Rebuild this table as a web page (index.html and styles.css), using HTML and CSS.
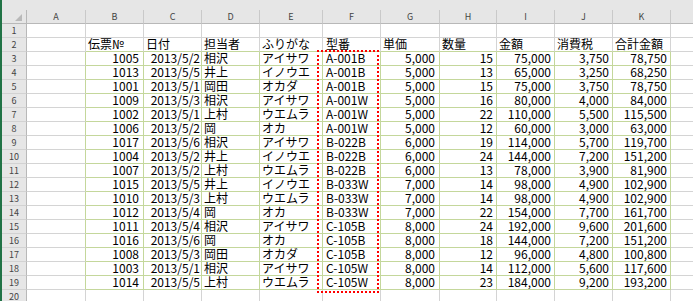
FILE: index.html
```html
<!DOCTYPE html>
<html lang="ja">
<head>
<meta charset="utf-8">
<title>Sheet</title>
<link rel="stylesheet" href="styles.css">
</head>
<body>
<div class="frame"></div>
<div class="sheet">
  <div class="corner"><svg width="8" height="7" viewBox="0 0 8 7"><polygon points="7,0 7,7 0,7" fill="#b9b9b9"/></svg></div>
  <div class="ch">A</div><div class="ch">B</div><div class="ch">C</div><div class="ch">D</div><div class="ch">E</div><div class="ch">F</div><div class="ch">G</div><div class="ch">H</div><div class="ch">I</div><div class="ch">J</div><div class="ch">K</div><div class="ch"></div>

  <div class="rh">1</div><div class="c"></div><div class="c"></div><div class="c"></div><div class="c"></div><div class="c"></div><div class="c"></div><div class="c"></div><div class="c"></div><div class="c"></div><div class="c"></div><div class="c"></div><div class="c"></div>

  <div class="rh">2</div><div class="c"></div><div class="c hg">伝票№</div><div class="c hg">日付</div><div class="c hg">担当者</div><div class="c hg">ふりがな</div><div class="c hg pf">型番</div><div class="c hg">単価</div><div class="c hg">数量</div><div class="c hg">金額</div><div class="c hg">消費税</div><div class="c hg">合計金額</div><div class="c"></div>

  <div class="rh">3</div><div class="c ag"></div><div class="c g n pb">1005</div><div class="c g n pc">2013/5/2</div><div class="c g">相沢</div><div class="c g">アイサワ</div><div class="c g pf">A-001B</div><div class="c g n pb">5,000</div><div class="c g n">15</div><div class="c g n">75,000</div><div class="c g n">3,750</div><div class="c g n">78,750</div><div class="c"></div>
  <div class="rh">4</div><div class="c ag"></div><div class="c g n pb">1013</div><div class="c g n pc">2013/5/5</div><div class="c g">井上</div><div class="c g">イノウエ</div><div class="c g pf">A-001B</div><div class="c g n pb">5,000</div><div class="c g n">13</div><div class="c g n">65,000</div><div class="c g n">3,250</div><div class="c g n">68,250</div><div class="c"></div>
  <div class="rh">5</div><div class="c ag"></div><div class="c g n pb">1001</div><div class="c g n pc">2013/5/1</div><div class="c g">岡田</div><div class="c g">オカダ</div><div class="c g pf">A-001B</div><div class="c g n pb">5,000</div><div class="c g n">15</div><div class="c g n">75,000</div><div class="c g n">3,750</div><div class="c g n">78,750</div><div class="c"></div>
  <div class="rh">6</div><div class="c ag"></div><div class="c g n pb">1009</div><div class="c g n pc">2013/5/3</div><div class="c g">相沢</div><div class="c g">アイサワ</div><div class="c g pf">A-001W</div><div class="c g n pb">5,000</div><div class="c g n">16</div><div class="c g n">80,000</div><div class="c g n">4,000</div><div class="c g n">84,000</div><div class="c"></div>
  <div class="rh">7</div><div class="c ag"></div><div class="c g n pb">1002</div><div class="c g n pc">2013/5/1</div><div class="c g">上村</div><div class="c g">ウエムラ</div><div class="c g pf">A-001W</div><div class="c g n pb">5,000</div><div class="c g n">22</div><div class="c g n">110,000</div><div class="c g n">5,500</div><div class="c g n">115,500</div><div class="c"></div>
  <div class="rh">8</div><div class="c ag"></div><div class="c g n pb">1006</div><div class="c g n pc">2013/5/2</div><div class="c g">岡</div><div class="c g">オカ</div><div class="c g pf">A-001W</div><div class="c g n pb">5,000</div><div class="c g n">12</div><div class="c g n">60,000</div><div class="c g n">3,000</div><div class="c g n">63,000</div><div class="c"></div>
  <div class="rh">9</div><div class="c ag"></div><div class="c g n pb">1017</div><div class="c g n pc">2013/5/6</div><div class="c g">相沢</div><div class="c g">アイサワ</div><div class="c g pf">B-022B</div><div class="c g n pb">6,000</div><div class="c g n">19</div><div class="c g n">114,000</div><div class="c g n">5,700</div><div class="c g n">119,700</div><div class="c"></div>
  <div class="rh">10</div><div class="c ag"></div><div class="c g n pb">1004</div><div class="c g n pc">2013/5/2</div><div class="c g">井上</div><div class="c g">イノウエ</div><div class="c g pf">B-022B</div><div class="c g n pb">6,000</div><div class="c g n">24</div><div class="c g n">144,000</div><div class="c g n">7,200</div><div class="c g n">151,200</div><div class="c"></div>
  <div class="rh">11</div><div class="c ag"></div><div class="c g n pb">1007</div><div class="c g n pc">2013/5/2</div><div class="c g">上村</div><div class="c g">ウエムラ</div><div class="c g pf">B-022B</div><div class="c g n pb">6,000</div><div class="c g n">13</div><div class="c g n">78,000</div><div class="c g n">3,900</div><div class="c g n">81,900</div><div class="c"></div>
  <div class="rh">12</div><div class="c ag"></div><div class="c g n pb">1015</div><div class="c g n pc">2013/5/5</div><div class="c g">井上</div><div class="c g">イノウエ</div><div class="c g pf">B-033W</div><div class="c g n pb">7,000</div><div class="c g n">14</div><div class="c g n">98,000</div><div class="c g n">4,900</div><div class="c g n">102,900</div><div class="c"></div>
  <div class="rh">13</div><div class="c ag"></div><div class="c g n pb">1010</div><div class="c g n pc">2013/5/3</div><div class="c g">上村</div><div class="c g">ウエムラ</div><div class="c g pf">B-033W</div><div class="c g n pb">7,000</div><div class="c g n">14</div><div class="c g n">98,000</div><div class="c g n">4,900</div><div class="c g n">102,900</div><div class="c"></div>
  <div class="rh">14</div><div class="c ag"></div><div class="c g n pb">1012</div><div class="c g n pc">2013/5/4</div><div class="c g">岡</div><div class="c g">オカ</div><div class="c g pf">B-033W</div><div class="c g n pb">7,000</div><div class="c g n">22</div><div class="c g n">154,000</div><div class="c g n">7,700</div><div class="c g n">161,700</div><div class="c"></div>
  <div class="rh">15</div><div class="c ag"></div><div class="c g n pb">1011</div><div class="c g n pc">2013/5/4</div><div class="c g">相沢</div><div class="c g">アイサワ</div><div class="c g pf">C-105B</div><div class="c g n pb">8,000</div><div class="c g n">24</div><div class="c g n">192,000</div><div class="c g n">9,600</div><div class="c g n">201,600</div><div class="c"></div>
  <div class="rh">16</div><div class="c ag"></div><div class="c g n pb">1016</div><div class="c g n pc">2013/5/6</div><div class="c g">岡</div><div class="c g">オカ</div><div class="c g pf">C-105B</div><div class="c g n pb">8,000</div><div class="c g n">18</div><div class="c g n">144,000</div><div class="c g n">7,200</div><div class="c g n">151,200</div><div class="c"></div>
  <div class="rh">17</div><div class="c ag"></div><div class="c g n pb">1008</div><div class="c g n pc">2013/5/3</div><div class="c g">岡田</div><div class="c g">オカダ</div><div class="c g pf">C-105B</div><div class="c g n pb">8,000</div><div class="c g n">12</div><div class="c g n">96,000</div><div class="c g n">4,800</div><div class="c g n">100,800</div><div class="c"></div>
  <div class="rh">18</div><div class="c ag"></div><div class="c g n pb">1003</div><div class="c g n pc">2013/5/1</div><div class="c g">相沢</div><div class="c g">アイサワ</div><div class="c g pf">C-105W</div><div class="c g n pb">8,000</div><div class="c g n">14</div><div class="c g n">112,000</div><div class="c g n">5,600</div><div class="c g n">117,600</div><div class="c"></div>
  <div class="rh">19</div><div class="c ag"></div><div class="c g n pb">1014</div><div class="c g n pc">2013/5/5</div><div class="c g">上村</div><div class="c g">ウエムラ</div><div class="c g pf">C-105W</div><div class="c g n pb">8,000</div><div class="c g n">23</div><div class="c g n">184,000</div><div class="c g n">9,200</div><div class="c g n">193,200</div><div class="c"></div>

  <div class="rh">20</div><div class="c"></div><div class="c"></div><div class="c"></div><div class="c"></div><div class="c"></div><div class="c"></div><div class="c"></div><div class="c"></div><div class="c"></div><div class="c"></div><div class="c"></div><div class="c"></div>

  <div class="marquee"></div>
</div>
</body>
</html>
```
FILE: styles.css
```css
html, body {
  margin: 0;
  padding: 0;
  height: 100%;
  overflow: hidden;
  background: #e6e6e6;
}
body {
  display: flex;
  align-items: stretch;
}
.frame {
  width: 2px;
  flex: none;
  background: #217346;
}
.sheet {
  position: relative;
  flex: none;
  display: grid;
  grid-template-columns: 25px 59px 58px 58px 58px 63px 58px 59px 57px 58px 58px 58px 23px;
  grid-template-rows: 24px;
  grid-auto-rows: 14px;
  align-content: start;
  font-family: "Noto Sans CJK JP", "Noto Sans", sans-serif;
  font-size: 12px;
  color: #000;
}
.corner, .ch {
  box-sizing: border-box;
  height: 14px;
  align-self: end;
  border-right: 1px solid #c9c9c9;
  border-bottom: 1px solid #b8b8b8;
}
.corner {
  display: flex;
  justify-content: flex-end;
  align-items: flex-end;
  padding: 0 3px 2px 0;
  border-right-color: #b8b8b8;
}
.corner svg { display: block; }
.ch {
  font-size: 9px;
  line-height: 13px;
  text-align: center;
  color: #444;
}
.rh {
  box-sizing: border-box;
  border-right: 1px solid #b8b8b8;
  border-bottom: 1px solid #d2d2d2;
  font-size: 9px;
  line-height: 13px;
  text-align: center;
  color: #444;
}
.c {
  box-sizing: border-box;
  background: #fff;
  border-right: 1px solid #d4d4d4;
  border-bottom: 1px solid #d4d4d4;
  padding: 0 2px;
  line-height: 12px;
  white-space: nowrap;
}
.g {
  border-right-color: #c4d79b;
  border-bottom-color: #c4d79b;
}
.ag { border-right-color: #c4d79b; }
.hg { border-bottom-color: #c4d79b; }
.n { text-align: right; padding-right: 3px; }
.pb { padding-right: 4px; }
.pc { padding-right: 1px; }
.pf { padding-left: 3px; }
.marquee {
  position: absolute;
  left: 315px;
  top: 50px;
  width: 62px;
  height: 243px;
  box-sizing: border-box;
  border: 2px dotted #ff0000;
  pointer-events: none;
}
```
